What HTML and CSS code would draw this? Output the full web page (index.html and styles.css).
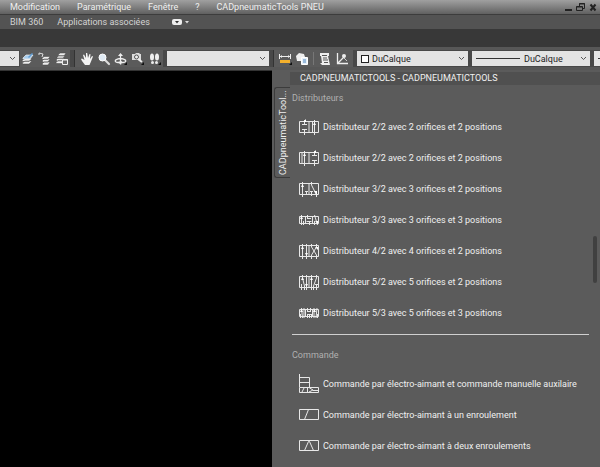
FILE: index.html
```html
<!DOCTYPE html>
<html lang="fr">
<head>
    <meta charset="UTF-8">
    <meta name="viewport" content="width=device-width, initial-scale=1.0">
    <title>CADpneumaticTools</title>
    <link rel="stylesheet" href="styles.css">
</head>
<body>
    <header class="menu-bar">
        <nav class="menus">
            <button>Modification</button>
            <button>Paramétrique</button>
            <button>Fenêtre</button>
            <button>?</button>
            <button>CADpneumaticTools PNEU</button>
        </nav>
        <div class="window-buttons">
            <button aria-label="Réduire"><svg width="9" height="10" viewBox="0 0 9 10"><path d="M1 8h7" stroke="#222" stroke-width="2"/></svg></button>
            <button aria-label="Restaurer"><svg width="10" height="10" viewBox="0 0 10 10" fill="none" stroke="#222"><path d="M3.500 4V1.500h5v5H7M3 2h6"/><path d="M.5 4.500h6v4h-6zM.5 5h6"/></svg></button>
            <button aria-label="Fermer"><svg width="8" height="10" viewBox="0 0 8 10"><path d="M1.500 2.500l5 6M6.500 2.500l-5 6" stroke="#222" stroke-width="2"/></svg></button>
        </div>
    </header>

    <nav class="ribbon-tabs">
        <button>BIM 360</button>
        <button>Applications associées</button>
        <button class="ribbon-toggle" aria-label="Réduire le ruban">
            <svg width="18" height="8" viewBox="0 0 18 8"><rect x="0" y="1" width="10" height="6" rx="2" fill="#eee"/><path d="M3 3h4L5 5.500z" fill="#333"/><path d="M13 3h4l-2 2.500z" fill="#ddd"/></svg>
        </button>
    </nav>
    <div class="ribbon"></div>

    <div class="toolbar">
        <div class="combo combo-cut">
            <select aria-label="État des calques"><option></option></select>
            <svg class="chevron" viewBox="0 0 7 5"><path d="M1 1l2.500 2.500L6 1"/></svg>
        </div>
        <div class="tools tools-layers">
            <button aria-label="Calques"><svg viewBox="0 0 14 14"><path d="M1 11l3-2h7l-3 3H2zM1 8.500l3-2h7l-3 3H2z" fill="#eee" stroke="#444" stroke-width=".5"/><path d="M2 6l3-3h7L9 7H2z" fill="#a9cdec" stroke="#eee" stroke-width=".7"/><path d="M7 5l4-4 1 1-4 4z" fill="#5f9dd5"/></svg></button>
            <button aria-label="Calque précédent"><svg viewBox="0 0 14 14"><path d="M4 12l2-2h6l-2 3H5zM4 9l2-2h6l-2 3H5zM4 6.500l2-2h6l-2 3H5z" fill="#eee" stroke="#444" stroke-width=".5"/><path d="M1 1l4 1-1 3M1 1v2" fill="none" stroke="#ddd"/></svg></button>
            <button aria-label="Gestionnaire d'états"><svg viewBox="0 0 14 14"><path d="M1 10.500l2-2h5v3H2zM1 8l2-2h6l-2 3H2zM2 5.500l2-2h6l-2 3H3zM3 3l2-2h6L9 4H4z" fill="#eee" stroke="#444" stroke-width=".5"/><path d="M7.500 7.500h5v5h-5z" fill="#666" stroke="#eee"/><path d="M7 8h6" stroke="#eee"/></svg></button>
        </div>
        <div class="tools tools-view">
            <button aria-label="Panoramique"><svg viewBox="0 0 14 14"><path d="M5 13L2 9 1 7l1-.5L4.500 8 3 3l1-.5L6 6V1h1.200L8 6l1.500-4 1 .3L10 7l2-3 1 .6-2 5-1.500 3.400z" fill="#f4f4f4"/></svg></button>
            <button aria-label="Zoom"><svg viewBox="0 0 14 14"><path d="M8 8l4 4" stroke="#ddd" stroke-width="2.200" stroke-linecap="round"/><circle cx="5.500" cy="5.500" r="3.500" fill="#dfeaf4" stroke="#fff"/></svg></button>
            <button aria-label="Orbite"><svg viewBox="0 0 14 14"><path d="M6.500 2v8M6.500 6.500c-7 1-7 4 0 4s7-3 0-4" fill="none" stroke="#eee" stroke-width="1.300"/><path d="M4 4l2.500-3L9 4zM4 10l3 3 1-4z" fill="#eee"/><path d="M13 10v3h-3z" fill="#111"/></svg></button>
            <button aria-label="Caméra"><svg viewBox="0 0 14 14"><path d="M1 2h3l1-1h3l1 1h1v6H1z" fill="#ddd"/><circle cx="5.500" cy="5" r="2" fill="#eee" stroke="#555"/><path d="M7 7l4 3" stroke="#eee" stroke-width="2"/><path d="M13 10v3h-3z" fill="#111"/></svg></button>
            <button aria-label="Navigation"><svg viewBox="0 0 14 14"><g fill="#eee"><ellipse cx="4" cy="5" rx="2" ry="3.500"/><ellipse cx="4.500" cy="10.500" rx="1.500" ry="1.500"/><ellipse cx="9" cy="5" rx="2" ry="3.500"/><ellipse cx="8.500" cy="10.500" rx="1.500" ry="1.500"/></g><path d="M13 10v3h-3z" fill="#111"/></svg></button>
        </div>
        <div class="combo combo-view">
            <select aria-label="Vue"><option></option></select>
            <svg class="chevron" viewBox="0 0 7 5"><path d="M1 1l2.500 2.500L6 1"/></svg>
        </div>
        <div class="tools tools-measure">
            <button aria-label="Distance"><svg viewBox="0 0 14 14"><path d="M1.500 2v5M12.500 2v5M2 4.500h10" stroke="#eee" fill="none"/><path d="M2 4.500L4 3v3zM12 4.500L10 3v3z" fill="#eee"/><path d="M2 8h10v3H2z" fill="#f3b02c"/><path d="M14 10v3h-3z" fill="#111"/></svg></button>
            <button aria-label="Propriétés"><svg viewBox="0 0 14 14"><path d="M1 4l3-3 5 1 1 3-3 4H2z" fill="#eee"/><path d="M6.500 5.500h6v7h-6z" fill="#e8f1fa" stroke="#fff"/><path d="M8 8h3M8 10h3" stroke="#4c86bf"/></svg></button>
            <span class="separator"></span>
            <button aria-label="Liste"><svg viewBox="0 0 14 14"><path d="M2 1h9v3h-1l2 9H4L2 11h2L3 4H2z" fill="#eee"/><path d="M4 3.500h5M5 6h4M5 8h5M6 10.500h4" stroke="#555"/></svg></button>
            <button aria-label="Coordonnées"><svg viewBox="0 0 14 14"><path d="M2.500 1v10.500H13M3 11l6-6" fill="none" stroke="#eee" stroke-width="1.300"/><circle cx="9" cy="4" r="2" fill="#eee"/><path d="M9 6l3 3" stroke="#ccc"/></svg></button>
        </div>
        <div class="combo combo-color">
            <span class="swatch"></span>
            <select aria-label="Couleur"><option>DuCalque</option></select>
            <svg class="chevron" viewBox="0 0 7 5"><path d="M1 1l2.500 2.500L6 1"/></svg>
        </div>
        <div class="combo combo-line">
            <span class="line-sample"></span>
            <select aria-label="Type de ligne"><option>DuCalque</option></select>
            <svg class="chevron" viewBox="0 0 7 5"><path d="M1 1l2.500 2.500L6 1"/></svg>
        </div>
        <div class="combo combo-weight">
            <span class="line-sample"></span>
        </div>
    </div>

    <div class="workspace">
        <main class="drawing"></main>
        <aside class="palette">
            <h1 class="palette-title">CADPNEUMATICTOOLS - CADPNEUMATICTOOLS</h1>
            <button class="side-tab">CADpneumaticTool...</button>
            <div class="palette-content">
                <section>
                    <h2>Distributeurs</h2>
                    <ul>
                        <li><button>
                            <svg viewBox="0 0 20 16"><path d="M.5 2.500h19v11H.5zM10 2.500v11M5.500 1v5M5.500 10v6M3 5.500h5M3 10.500h5M13.500 3v10M15.500 1v15"/><path class="tip" d="M4 3h3V0zM14 6h3l-1.500-3z"/></svg>
                            Distributeur 2/2 avec 2 orifices et 2 positions
                        </button></li>
                        <li><button>
                            <svg viewBox="0 0 20 16"><path d="M.5 2.500h19v11H.5zM10 2.500v11M5.500 1v15M3 3v10M15.500 1v5M15.500 10v6M13 5.500h5M13 10.500h5"/><path class="tip" d="M4 6h3L5.500 3zM14 3h3V0z"/></svg>
                            Distributeur 2/2 avec 2 orifices et 2 positions
                        </button></li>
                        <li><button>
                            <svg viewBox="0 0 20 16"><path d="M.5 2.500h19v11H.5zM10 2.500v11M3.500 1v12M7.500 10v4M6 10.500h3M12.500 1v3l5 10M12.500 10v5M11 10.500h3M3.500 12v4M17.500 12v4"/><path class="tip" d="M2 6h3L3.500 3zM15 10l3 0v4z"/></svg>
                            Distributeur 3/2 avec 3 orifices et 2 positions
                        </button></li>
                        <li><button>
                            <svg viewBox="0 0 20 16"><path d="M.5 4.500h19v7H.5zM6.500 4v8M13.500 4v8M2.500 3v10M4.500 9v4M8 6.500h4M7.500 9.500h5M8.500 3v3M10.500 9v4M15.500 3l3 10M15.500 9v4"/><path class="tip" d="M1 7h3L2.500 4zM16 9l3 0v3z"/></svg>
                            Distributeur 3/3 avec 3 orifices et 3 positions
                        </button></li>
                        <li><button>
                            <svg viewBox="0 0 20 16"><path d="M.5 2.500h19v11H.5zM10 2.500v11M3.500 1v15M7.500 1v15M12.500 1v3l5 8v4M17.500 1v3l-5 8v4"/><path class="tip" d="M2 6h3L3.500 3zM6 10h3l-1.500 3zM16 4h3v3z"/></svg>
                            Distributeur 4/2 avec 4 orifices et 2 positions
                        </button></li>
                        <li><button>
                            <svg viewBox="0 0 20 16"><path d="M.5 2.500h19v11H.5zM10 2.500v11M2.500 10v6M3.500 1v3l2 8v4M7.500 1v15M12.500 1v15M17.500 1v3l-3 8v4M17.500 10v6M16 10.500h3"/><path class="tip" d="M2 6h3L3.500 3zM6 10h3l-1.500 3zM11 6h3l-1.500-3z"/></svg>
                            Distributeur 5/2 avec 5 orifices et 2 positions
                        </button></li>
                        <li><button>
                            <svg viewBox="0 0 20 16"><path d="M.5 4.500h19v7H.5zM6.500 4v8M13.500 4v8M1.500 9v4M2.500 3l1 10M5 3v10M8.500 3v3M11.500 3v3M8 6.500h4M8.500 9v4M10.500 9v4M12.500 9v4M8 9.500h5M15 3v10M18 3l-1 10M18.500 9v4"/><path class="tip" d="M1 7h3L2.500 4zM14 7h3l-1.500-3z"/></svg>
                            Distributeur 5/3 avec 5 orifices et 3 positions
                        </button></li>
                    </ul>
                </section>
                <section>
                    <h2>Commande</h2>
                    <ul>
                        <li><button>
                            <svg class="tall" viewBox="0 0 20 20"><path d="M.5 0v13M.5 3.500h10v10M.5 8.500h10M.5 13.500h19v5H.5zM3 18l2-4M8.500 14v4M10 13.500l4 2.500-4 2M14 16.500h5"/></svg>
                            Commande par électro-aimant et commande manuelle auxilaire
                        </button></li>
                        <li><button>
                            <svg viewBox="0 0 20 16"><path d="M.5 2.500h19v10H.5zM5.500 12.500l4-10"/></svg>
                            Commande par électro-aimant à un enroulement
                        </button></li>
                        <li><button>
                            <svg viewBox="0 0 20 16"><path d="M.5 2.500h19v10H.5zM5.500 12.500l4-9h1l4 9"/></svg>
                            Commande par électro-aimant à deux enroulements
                        </button></li>
                    </ul>
                </section>
            </div>
            <div class="scroll-track"><div class="scroll-thumb"></div></div>
        </aside>
    </div>
</body>
</html>
```

FILE: styles.css
```css
* {
    box-sizing: border-box;
}

body {
    display: flex;
    flex-direction: column;
    min-height: 100vh;
    margin: 0;
    background-color: #5b5b5b;
    color: #f0f0f0;
    font-family: Roboto, 'Open Sans', sans-serif;
    font-size: 9px;
    line-height: 14px;
}

button,
select {
    margin: 0;
    padding: 0;
    border: none;
    background: none;
    color: inherit;
    font: inherit;
    white-space: nowrap;
}

svg {
    display: block;
    flex: none;
}

/* Menu bar */
.menu-bar {
    display: flex;
    justify-content: space-between;
    height: 14px;
    padding: 0 3px 0 10px;
    background: linear-gradient(#a0a0a0, #606060);
}

.menus {
    display: flex;
    gap: 17px;
    line-height: 13px;
}

.window-buttons {
    display: flex;
    align-items: center;
    gap: 3px;
}

/* Ribbon */
.ribbon-tabs {
    display: flex;
    align-items: center;
    gap: 14px;
    height: 15px;
    padding-left: 10px;
    border-top: 1px solid #3c3c3c;
    background-color: #535353;
    color: #d4d4d4;
}

.ribbon-toggle {
    margin-left: 8px;
}

.ribbon {
    height: 18px;
    background-color: #383838;
}

/* Toolbar */
.toolbar {
    display: flex;
    align-items: center;
    gap: 4px;
    height: 23px;
    border-top: 3px solid #575757;
    border-bottom: 3px solid #575757;
    background-color: #484848;
}

.combo {
    display: flex;
    align-items: center;
    height: 15px;
    flex: none;
    padding-right: 3px;
    background-color: #e3e3e3;
    color: #222;
}

.combo select {
    flex: 1;
    min-width: 0;
    appearance: none;
    outline: none;
}

.combo-cut {
    width: 19px;
}

.combo-view {
    width: 102px;
}

.combo-color {
    width: 111px;
    gap: 3px;
    padding-left: 4px;
}

.combo-line {
    width: 118px;
    gap: 4px;
    padding-left: 4px;
}

.combo-weight {
    flex: 1;
    padding: 0 0 0 4px;
    overflow: hidden;
}

.chevron {
    width: 7px;
    height: 5px;
    fill: none;
    stroke: #555;
}

.swatch {
    width: 8px;
    height: 8px;
    border: 1px solid #222;
    background-color: #fff;
}

.line-sample {
    width: 44px;
    height: 1px;
    background-color: #333;
}

.tools {
    display: flex;
    flex: none;
    align-items: center;
    gap: 3px;
    height: 17px;
    background-color: #5b5b5b;
}

.tools svg {
    width: 14px;
    height: 14px;
}

.tools-layers {
    width: 50px;
    margin-left: -3px;
    padding-left: 1px;
}

.tools-view {
    width: 89px;
    padding-left: 5px;
    border-left: 1px solid #333;
}

.tools-measure {
    width: 80px;
    padding-left: 4px;
    border-left: 1px solid #333;
}

.separator {
    width: 1px;
    height: 13px;
    margin: 0 1px;
    background-color: #777;
}

/* Workspace */
.workspace {
    display: flex;
    flex: 1;
}

.drawing {
    flex: 1;
    border-top: 1px solid #333;
    background-color: #000;
}

.palette {
    display: grid;
    grid-template-columns: 16px 1fr 11px;
    grid-template-rows: 15px 1fr;
    width: 328px;
    padding-left: 2px;
    background-color: #5b5b5b;
}

.palette-title {
    grid-column: 2 / 4;
    margin: 2px 0 0;
    padding-left: 10px;
    background-color: #505050;
    font-size: 9px;
    font-weight: normal;
    line-height: 13px;
}

.side-tab {
    align-self: start;
    height: 91px;
    margin-top: 2px;
    border: 1px solid #3c3c3c;
    border-left: none;
    border-radius: 0 3px 3px 0;
    writing-mode: vertical-rl;
    transform: rotate(180deg);
}

.palette-content {
    padding: 6px 0 0 2px;
}

.palette h2 {
    margin: 0;
    color: #b0b0b0;
    font-size: 9px;
    font-weight: normal;
}

.palette ul {
    margin: 0;
    padding: 6px 0 0 7px;
    list-style: none;
}

.palette section + section {
    margin-top: 6px;
    padding-top: 13px;
    border-top: 1px solid #d0d0d0;
}

.palette li button {
    display: flex;
    align-items: center;
    gap: 4px;
    height: 31px;
}

.palette li svg {
    width: 20px;
    height: 16px;
    fill: none;
    stroke: #e8e8e8;
}

.palette li .tall {
    height: 20px;
}

.palette .tip {
    fill: #fff;
    stroke: none;
}

.scroll-track {
    padding: 151px 3px 0 4px;
}

.scroll-thumb {
    height: 47px;
    border-radius: 2px;
    background-color: #404040;
}
```
